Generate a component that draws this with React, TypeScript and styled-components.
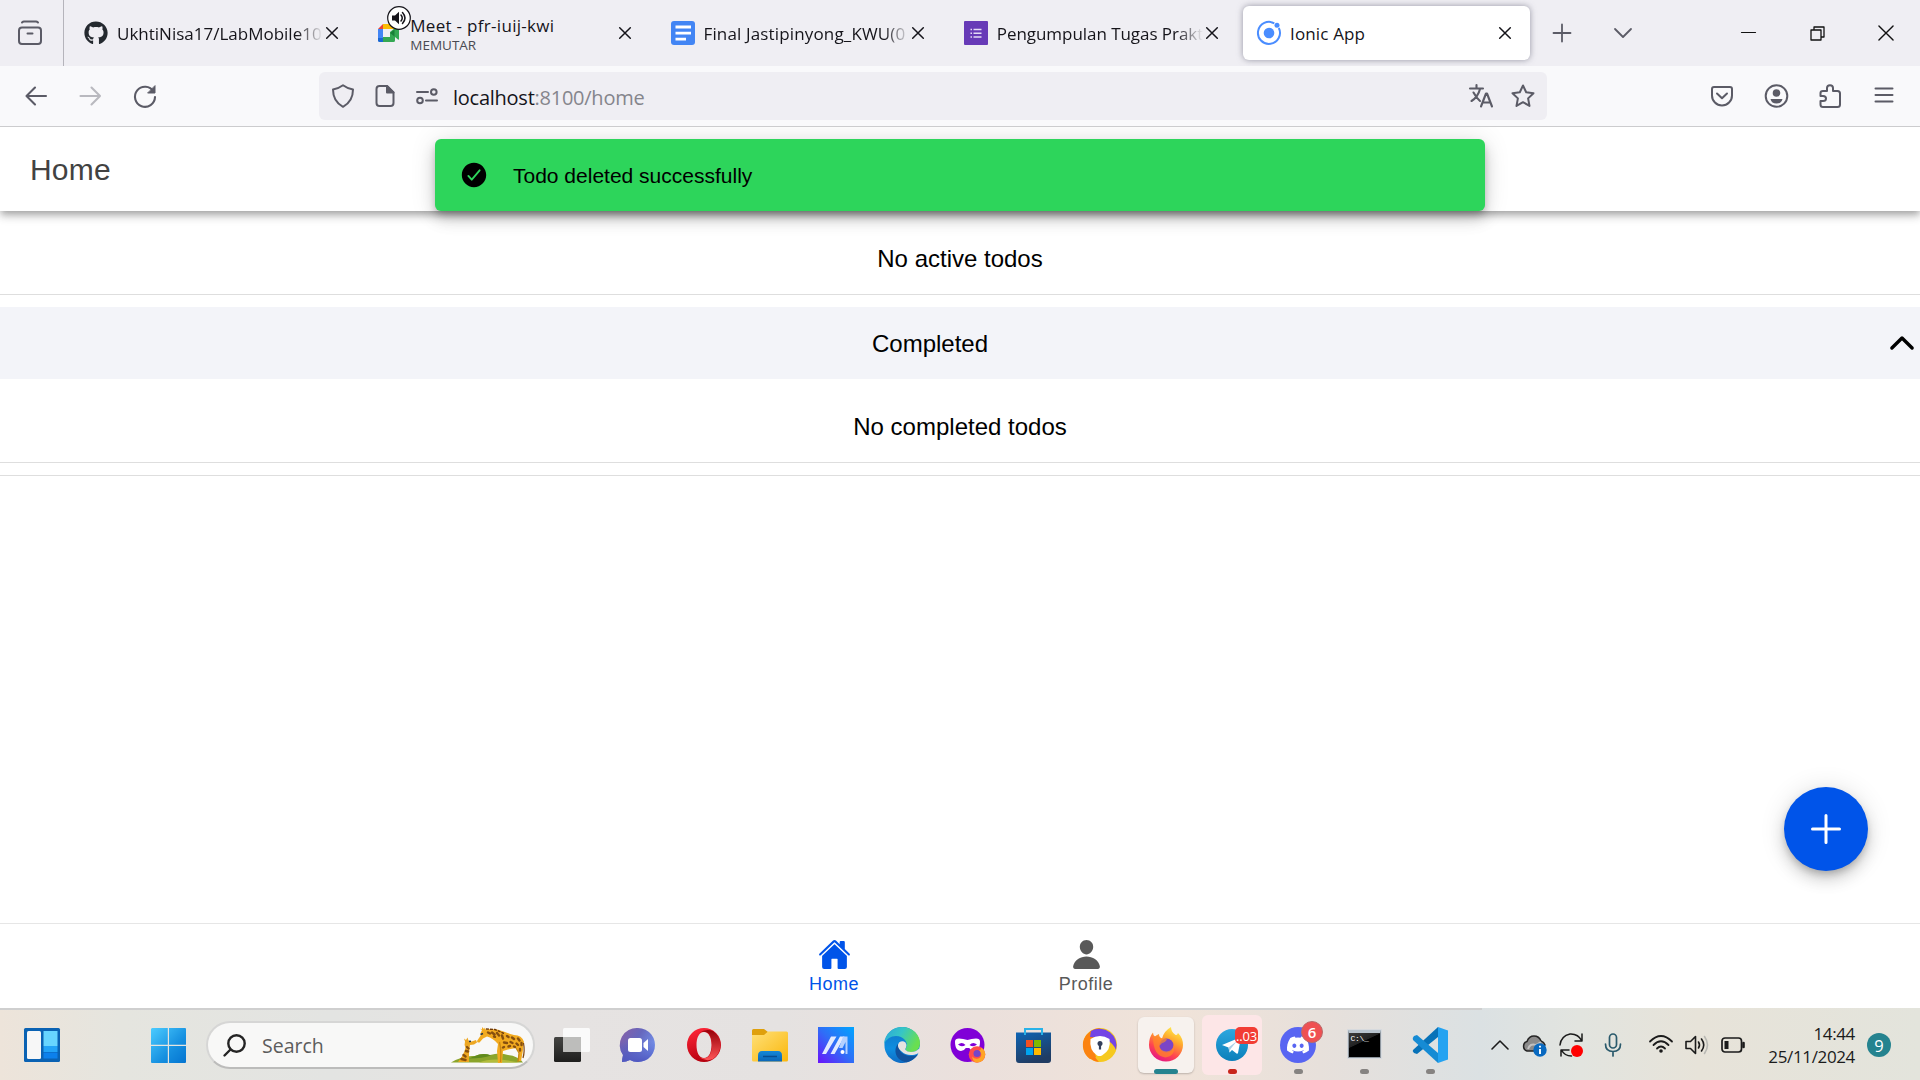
import React from 'react';
import styled, { createGlobalStyle, css } from 'styled-components';
import { IoHome, IoPerson, IoCheckmarkCircle, IoChevronUp, IoAdd } from 'react-icons/io5';
import { FaGithub, FaDiscord } from 'react-icons/fa';

const GlobalStyle = createGlobalStyle`
  * { box-sizing: border-box; }
  html, body { margin: 0; padding: 0; }
  body { width: 1920px; height: 1080px; overflow: hidden; background: #fff; }
  svg { display: block; flex: none; overflow: visible; }
`;

const uiFont = `"Open Sans", "Noto Sans", sans-serif`;
const appFont = `"Liberation Sans", Arial, sans-serif`;

const Screen = styled.div`
  width: 1920px;
  height: 1080px;
  display: flex;
  flex-direction: column;
  overflow: hidden;
  font-family: ${uiFont};
`;

/* ---------- tab strip ---------- */
const TabStrip = styled.div`
  height: 66px;
  flex: none;
  display: flex;
  align-items: stretch;
  background: #efeef3;
`;
const SidebarSlot = styled.div`
  width: 64px;
  padding-left: 18px;
  border-right: 1px solid #b5b4bb;
  display: flex;
  align-items: center;
  margin-right: 3px;
`;
const Tab = styled.div<{ $active?: boolean }>`
  width: 287.25px;
  height: 54px;
  margin: 6px 3px;
  padding: 0 17.5px 0 14px;
  display: flex;
  align-items: center;
  gap: 9px;
  border-radius: 6px;
  ${p => p.$active && css`
    background: #fff;
    box-shadow: 0 0 6px rgba(90, 90, 110, 0.6);
  `}
`;
const Favicon = styled.div`
  position: relative;
  width: 24px;
  height: 24px;
  display: flex;
  align-items: center;
  justify-content: center;
`;
const SoundBadge = styled.div`
  position: absolute;
  left: 10px;
  top: -15px;
`;
const TabText = styled.div<{ $fade?: boolean }>`
  flex: 1;
  min-width: 0;
  overflow: hidden;
  color: #15141a;
  padding-top: 1px;
  ${p => p.$fade && css`
    mask-image: linear-gradient(to right, #000 180px, transparent 206px);
  `}
`;
const TabTitle = styled.div<{ $spacing?: number }>`
  font-size: 17px;
  line-height: 24px;
  white-space: nowrap;
  letter-spacing: ${p => p.$spacing ?? 0}px;
`;
const TabState = styled.div`
  font-size: 13.5px;
  line-height: 15px;
  color: #4a4a52;
`;
const CloseSlot = styled.div`
  width: 16px;
  margin-left: -9px;
  display: flex;
  justify-content: center;
`;
const StripButtons = styled.div`
  display: flex;
  align-items: center;
  gap: 43px;
  padding-left: 20px;
`;
const WindowButtons = styled.div`
  margin-left: auto;
  display: flex;
  align-items: center;
  gap: 53px;
  padding-right: 26px;
`;

/* ---------- navigation bar ---------- */
const NavBar = styled.div`
  height: 61px;
  flex: none;
  display: flex;
  align-items: center;
  background: #f9f9fb;
  border-bottom: 1px solid #ccccce;
  padding: 0 24px 0 25px;
`;
const NavButtons = styled.div`
  width: 294px;
  display: flex;
  gap: 31px;
`;
const UrlBar = styled.div`
  width: 1228px;
  height: 48px;
  border-radius: 6px;
  background: #efeef3;
  display: flex;
  align-items: center;
  padding: 0 12px;
`;
const UrlIcons = styled.div`
  display: flex;
  gap: 18px;
  width: 122px;
`;
const Url = styled.div`
  flex: 1;
  font-size: 20px;
  letter-spacing: -0.25px;
  color: #85858c;
  padding-top: 2px;
`;
const UrlHost = styled.span`
  color: #15141a;
`;
const UrlActions = styled.div`
  display: flex;
  gap: 18px;
`;
const ToolButtons = styled.div`
  margin-left: auto;
  display: flex;
  align-items: center;
  gap: 30px;
`;

/* ---------- app page ---------- */
const Page = styled.main`
  position: relative;
  height: 881px;
  flex: none;
  display: flex;
  flex-direction: column;
  overflow: hidden;
  background: #fff;
  font-family: ${appFont};
`;
const Header = styled.header`
  height: 84px;
  flex: none;
  display: flex;
  align-items: center;
  padding: 2px 0 0 30px;
  font-size: 30px;
  letter-spacing: 0.2px;
  color: #424242;
  background: #fff;
  z-index: 1;
  box-shadow: 0 3px 6px -1.5px rgba(0,0,0,.2), 0 6px 7.5px rgba(0,0,0,.14), 0 1.5px 15px rgba(0,0,0,.12);
  clip-path: inset(0 0 -30px 0);
`;
const Toast = styled.div`
  position: absolute;
  z-index: 2;
  left: 435px;
  top: 12px;
  width: 1050px;
  height: 72px;
  border-radius: 6px;
  background: #2dd55b;
  box-shadow: 0 4.5px 7.5px -1.5px rgba(0,0,0,.2), 0 9px 15px rgba(0,0,0,.14), 0 1.5px 27px rgba(0,0,0,.12);
  display: flex;
  align-items: center;
  gap: 24px;
  padding-left: 24px;
  font-size: 21px;
  color: #000;
`;
const ToastText = styled.span`
  padding-top: 2px;
`;
const Content = styled.section`
  flex: 1;
`;
const EmptyRow = styled.div`
  height: 84px;
  border-bottom: 1px solid #dedede;
  display: flex;
  align-items: center;
  justify-content: center;
  padding-top: 13px;
  font-size: 24px;
`;
const SectionRow = styled.div`
  height: 72px;
  margin-top: 12px;
  background: #f3f4f9;
  display: flex;
  align-items: center;
  font-size: 24px;
`;
const SectionLabel = styled.div`
  flex: 1;
  text-align: center;
  padding: 2px 24px 0 0;
`;
const ListEnd = styled.div`
  height: 13px;
  border-bottom: 1px solid #dedede;
`;
const Fab = styled.button`
  position: absolute;
  right: 52px;
  bottom: 137px;
  width: 84px;
  height: 84px;
  border: 0;
  padding: 0;
  border-radius: 50%;
  display: flex;
  align-items: center;
  justify-content: center;
  color: #fff;
  background: #0054e9;
  box-shadow: 0 4.5px 7.5px -1.5px rgba(0,0,0,.2), 0 9px 15px rgba(0,0,0,.14), 0 1.5px 27px rgba(0,0,0,.12);
`;
const TabBar = styled.nav`
  height: 85px;
  flex: none;
  border-top: 1px solid #e6e6e6;
  display: flex;
  justify-content: center;
`;
const TabButton = styled.div<{ $selected?: boolean }>`
  width: 252px;
  display: flex;
  flex-direction: column;
  align-items: center;
  padding-top: 14px;
  gap: 3px;
  font-size: 18px;
  line-height: 21px;
  letter-spacing: 0.5px;
  color: ${p => (p.$selected ? '#0054e9' : '#595959')};
`;

/* ---------- taskbar ---------- */
const TaskBar = styled.footer`
  height: 72px;
  flex: none;
  display: flex;
  align-items: center;
  padding-top: 2px;
  background:
    linear-gradient(#cfcfcf, #cfcfcf) 0 0 / 1482px 2px no-repeat,
    linear-gradient(90deg, #ede4da 0, #e5e5df 120px, #e3e4e2 330px, #e6e3e2 560px, #e5e2e1 780px, #ebe0dc 980px, #f0e3d9 1180px, #e7e0db 1320px, #dbe1e3 1480px, #e2e4df 1580px, #e7e3d9 1700px, #e3e4dc 1920px);
`;
const StartArea = styled.div`
  width: 539px;
  display: flex;
  align-items: center;
  padding-left: 24px;
`;
const StartLogo = styled.div`
  margin: 1px 20px 0 91px;
`;
const SearchBox = styled.div`
  width: 329px;
  height: 48px;
  border-radius: 24px;
  border: 2px solid #d6d6d5;
  border-bottom-color: #bcbcbb;
  background: #f8f8f7;
  display: flex;
  align-items: center;
  padding: 0 6px 0 15px;
  font-size: 19.5px;
  color: #5c5c5c;
`;
const SearchText = styled.div`
  flex: 1;
  padding-left: 16px;
`;
const Apps = styled.div`
  display: flex;
`;
const AppCell = styled.div<{ $tone?: 'active' | 'alert' }>`
  position: relative;
  width: ${p => (p.$tone === 'alert' ? 60 : 56)}px;
  height: ${p => (p.$tone === 'alert' ? 60 : 56)}px;
  margin: 0 ${p => (p.$tone === 'alert' ? 3 : 5)}px;
  align-self: center;
  border-radius: 6px;
  display: flex;
  align-items: center;
  justify-content: center;
  ${p => p.$tone === 'active' && css`background: #f7f2ee; box-shadow: 0 1px 2px rgba(0,0,0,.22);`}
  ${p => p.$tone === 'alert' && css`background: #fde6e7;`}
`;
const Indicator = styled.span<{ $w: number; $color: string; $b?: number }>`
  position: absolute;
  bottom: ${p => p.$b ?? -1}px;
  width: ${p => p.$w}px;
  height: 5px;
  border-radius: 3px;
  background: ${p => p.$color};
`;
const CountBadge = styled.span<{ $round?: boolean }>`
  position: absolute;
  display: flex;
  align-items: center;
  justify-content: center;
  color: #fff;
  ${p => p.$round
    ? css`left: 31px; top: 4px; width: 22px; height: 22px; border-radius: 50%; background: #ef5052; border: 1px solid #b96a6a; font-size: 15px; font-weight: 600;`
    : css`left: 33px; top: 12px; width: 23px; height: 17px; border-radius: 5px; background: #f23c34; font-size: 13px; letter-spacing: -0.2px;`}
`;
const Tray = styled.div`
  margin-left: auto;
  padding-right: 29px;
  display: flex;
  align-items: center;
`;
const TrayItem = styled.div<{ $gap?: number }>`
  margin-right: ${p => p.$gap ?? 12}px;
`;
const Clock = styled.div`
  width: 98px;
  text-align: right;
  font-size: 17px;
  line-height: 23px;
  letter-spacing: -0.35px;
  color: #1b1b1b;
  margin-right: 12px;
  padding-bottom: 1px;
`;
const Notify = styled.div`
  width: 24px;
  height: 24px;
  border-radius: 50%;
  background: #25838f;
  color: #fff;
  font-size: 16.5px;
  display: flex;
  align-items: center;
  justify-content: center;
`;

type LineProps = { w?: number; h?: number; box?: string; color?: string; sw?: number; children: React.ReactNode };
const Line = ({ w = 24, h = 24, box, color = '#5b5b66', sw = 2, children }: LineProps) => (
  <svg width={w} height={h} viewBox={box ?? `0 0 ${w} ${h}`} fill="none" stroke={color} strokeWidth={sw} strokeLinecap="round" strokeLinejoin="round">
    {children}
  </svg>
);

const Cross = ({ size = 12, color = '#15141a', sw = 1.5 }) => (
  <Line w={size} h={size} box="0 0 12 12" color={color} sw={sw * 12 / size}><path d="M.7.7l10.6 10.6M11.3.7L.7 11.3" /></Line>
);

const MeetIcon = () => (
  <svg width="24" height="20" viewBox="0 0 24 20">
    <path d="M1 6L6 1v5z" fill="#ea4335" />
    <path d="M6 1h10.5q1.5 0 1.5 1.5V6H6z" fill="#fbbc04" />
    <path d="M1 6h5v9H1z" fill="#4285f4" />
    <path d="M1 15h5v4H2.500Q1 19 1 17.500z" fill="#1967d2" />
    <path d="M6 14h7V9l5-4v12.500q0 1.500-1.500 1.500H6z" fill="#34a853" />
    <path d="M13 10l4.500-3.500v7z" fill="#188038" />
    <path d="M18 6l3-2.500q1-.5 1 .5v12q0 1-1 .5L18 14z" fill="#34a853" />
  </svg>
);
const SoundIcon = () => (
  <svg width="24" height="24" viewBox="0 0 24 24">
    <circle cx="12" cy="12" r="11.300" fill="#fff" stroke="#15141a" strokeWidth="1.200" />
    <path d="M5 9.500h3l4-3.700v12.400l-4-3.700H5z" fill="#15141a" />
    <path d="M14 9q2.500 3 0 6M15.500 6.500q5 5.500 0 11" fill="none" stroke="#15141a" strokeWidth="1.500" strokeLinecap="round" />
  </svg>
);
const DocsIcon = () => (
  <svg width="24" height="24" viewBox="0 0 24 24">
    <rect width="24" height="24" rx="3" fill="#4285f4" />
    <path d="M4.500 6h15.500M4.500 12.200h15.500M4.500 18.200h10.500" stroke="#fff" strokeWidth="2.800" />
  </svg>
);
const FormsIcon = () => (
  <svg width="24" height="24" viewBox="0 0 24 24">
    <rect width="24" height="24" rx="1" fill="#673ab7" />
    <path d="M9.500 8.500h8M9.500 12.200h8M9.500 16h8M6.500 8.500H8M6.500 12.200H8M6.500 16H8" stroke="#e5dcf5" strokeWidth="1.400" />
  </svg>
);
const IonicIcon = () => (
  <svg width="24" height="24" viewBox="0 0 24 24">
    <path d="M17.300 2.300A11 11 0 1 0 21.800 7" fill="none" stroke="#4a8dff" strokeWidth="2" />
    <circle cx="12" cy="12" r="5.300" fill="#4a8dff" />
    <circle cx="20" cy="4.300" r="2.500" fill="#4a8dff" />
  </svg>
);

const GiraffeArt = () => (
  <svg width="76" height="36" viewBox="0 0 76 36">
    <path d="M0 35.500Q12 28 24 29q7-3.500 15-1 10-3 18 0 10 1 15 7.500z" fill="#8ba52c" />
    <path d="M24 29q8-3.500 16-.5-8 3-22 3z" fill="#5f8a1d" />
    <path d="M28 35.500q14-6 40 0z" fill="#b3bd3c" />
    <path d="M7 35q6-7 7.500-14.500-1.500-3-.5-6l-1-3 2 1.500 1.500-2.500 1 3 3 1 4.500-1.500 1 2.500-3 2-4 .5q-1.500 8-1 17z" fill="#eda722" />
    <path d="M26 14l4-6q-1-2 1-4.500L29 1.500l2 1L31 0l2 2 1-1.500.5 2Q45 1 54 5q5 2 9 3 8 0 10 7-1 3-1 8l-2 11h-2.500l.5-9-3-4-8 1.500-5 1.500-1 12h-4l-1-12 1-7Q42 11 36 9.500l-4 2-3.500 4Q26 16 26 14z" fill="#f2ab20" />
    <path d="M48.500 15q2 8 1 20M65 21l3 5-1 9" stroke="#c98712" strokeWidth="1.300" fill="none" />
    <path d="M35 2l9 .5 9 4" stroke="#6e3808" strokeWidth="1.400" fill="none" strokeDasharray="3 1" />
    <path d="M37 5.500l2 1M41 5.500l2.500 2M46 6l2 2.500M43 9.500l1 .3M51 8.500l1 3M56 9l1.500 1M61 10.500l2 1.500M67 11.500l1.500 2M53 15.500l3 .5M59.500 15l2 1M65.500 16.500l1.500 1.500M52 20.500l1-.5M57.500 19.500l1.500-.5M70.500 16v2M69 22v1.500M63 19.500l1 .5M16 20l1.500 1.500M15 24l2 .5M12.500 28l2 1.500M10.500 32l4 1" stroke="#87500f" strokeWidth="2.400" strokeLinecap="round" />
    <path d="M72.500 16q1.500 8-.5 15" stroke="#81460c" strokeWidth="1.200" fill="none" />
    <path d="M29.500 7.500l2.500-1M18 14.500l2-.3" stroke="#26384a" strokeWidth="1.600" />
  </svg>
);

const TaskViewIcon = () => (
  <svg width="36" height="36" viewBox="0 0 36 36">
    <defs><linearGradient id="tv" x2="0" y2="1"><stop stopColor="#454543" /><stop offset="1" stopColor="#1e1e1d" /></linearGradient></defs>
    <rect x="0" y="10" width="27" height="25" rx="1.500" fill="url(#tv)" />
    <rect x="9" y="1" width="27" height="24" rx="1.500" fill="#fafafa" />
    <path d="M9 10h18v15H10.500Q9 25 9 23.500z" fill="#bdbdbb" />
  </svg>
);
const ChatIcon = () => (
  <svg width="36" height="36" viewBox="0 0 36 36">
    <defs><linearGradient id="ch" x1="0" x2="1" y2=".6"><stop stopColor="#8a5fa5" /><stop offset=".5" stopColor="#6667bd" /><stop offset="1" stopColor="#7595ef" /></linearGradient>
    <linearGradient id="ch2" x2="0" y2="1"><stop offset=".4" stopColor="#5058c0" stopOpacity="0" /><stop offset="1" stopColor="#5058c0" /></linearGradient></defs>
    {['url(#ch)', 'url(#ch2)'].map(f => <path key={f} d="M18 1a17 17 0 1 1-8 32q-4 2-8 2 0-3 1-7A17 17 0 0 1 18 1z" fill={f} />)}
    <rect x="8" y="11" width="14" height="14" rx="2.500" fill="#fff" />
    <path d="M23.500 16l4.500-4v12l-4.500-4z" fill="#fff" />
  </svg>
);
const OperaIcon = () => (
  <svg width="36" height="36" viewBox="0 0 36 36">
    <defs><linearGradient id="op" x1=".2" x2=".5" y2="1"><stop stopColor="#ff2638" /><stop offset="1" stopColor="#b4000e" /></linearGradient>
    <linearGradient id="op2" x2="0" y2="1"><stop stopColor="#960008" /><stop offset="1" stopColor="#ff5558" /></linearGradient></defs>
    <path fillRule="evenodd" d="M18 1a17 17 0 0 1 0 34a17 17 0 0 1 0-34zM18 5c-5 0-7.500 6-7.500 13s2.500 13 7.500 13 7.500-6 7.500-13S23 5 18 5z" fill="url(#op)" />
    <path d="M13 6Q20 1 27 4a17 17 0 0 1 0 28q-7 3-14-2 6 3 10-1c4-6 4-16 0-22q-4-4-10-1z" fill="url(#op2)" />
  </svg>
);
const FolderIcon = () => (
  <svg width="36" height="36" viewBox="0 0 36 36">
    <defs><linearGradient id="fo" x2="1" y2="1"><stop stopColor="#ffe078" /><stop offset="1" stopColor="#fab70c" /></linearGradient>
    <linearGradient id="fo2" x2="0" y2="1"><stop stopColor="#1488d8" /><stop offset="1" stopColor="#0b66b7" /></linearGradient></defs>
    <path d="M0 3.500Q0 2 1.500 2H12l4 3h18v6H0z" fill="#dfa00c" />
    <path d="M0 8h12l4-3.500h18.500Q36 4.500 36 6v27q0 1.500-1.500 1.500h-33Q0 34.500 0 33z" fill="url(#fo)" />
    <path d="M6 34.500v-6Q6 24 10 24h16q4 0 4 4.500v6z" fill="url(#fo2)" />
    <path d="M11 29.500h14" stroke="#074d91" strokeWidth="1.500" />
  </svg>
);
const AsusIcon = () => (
  <svg width="36" height="36" viewBox="0 0 36 36">
    <defs><linearGradient id="as" x1="1" y1="0" x2="0" y2="1"><stop stopColor="#00a5ff" /><stop offset=".5" stopColor="#2f6ef7" /><stop offset="1" stopColor="#6a12fb" /></linearGradient></defs>
    <path d="M0 0h36v36H0z" fill="url(#as)" />
    <path d="M4 27L13 9.500h5.500L8 27zM12.500 27L22 9.500h4.500L16.500 27z" fill="#e2eaff" />
    <path d="M25 9.500h4.500V27h-2V15l-3 6h-3.500z" fill="#b4d0ff" />
    <circle cx="24.500" cy="25" r="2" fill="#fff" />
  </svg>
);
const EdgeIcon = () => (
  <svg width="36" height="36" viewBox="0 0 36 36">
    <defs>
      <linearGradient id="e1" x2="1" y2=".4"><stop stopColor="#2aa5dc" /><stop offset=".5" stopColor="#36c6c6" /><stop offset="1" stopColor="#69df50" /></linearGradient>
      <linearGradient id="e2" x2="0" y2="1"><stop stopColor="#1174c5" /><stop offset=".6" stopColor="#0e8ee0" /><stop offset="1" stopColor="#0f6cc4" /></linearGradient>
    </defs>
    <path d="M18 0a18 18 0 1 0 16 27L36 18A18 18 0 0 0 18 0z" fill="url(#e2)" />
    <path d="M0 17C1 6 9 0 18 0c11 0 18 8 18 16 0 6-4 9-8.500 9-5 0-7-1.500-5.500-4 3-6-3-12-10-12Q4 9 0 17z" fill="url(#e1)" />
    <path d="M14 17c-5 5-3 17 9 18.300Q30 33 34 27.500q-5 2.500-11 1-8-2-9-11.500z" fill="#10529e" />
    <path d="M21.500 23q-.8-1 .5-2.500 1-3-.5-5-3-2.500-6.500 0-2.500 4 1.500 8 6 6 14 4.200Q33 27 34.500 26l2-3-2-1q-2.500 3-7.500 3-4 0-5.500-2z" fill="#e7e3e1" />
  </svg>
);
const PrivateIcon = () => (
  <svg width="36" height="36" viewBox="0 0 36 36">
    <circle cx="17.500" cy="18" r="17" fill="#8000d7" />
    <path fillRule="evenodd" d="M5 14.500q0-3 4-3 4 0 8.500 1.500 4-1.500 8.500-1.500 4 0 4 3c0 6-2 9.500-6 9.500q-3 0-4.800-3h-3.400Q14 24 11 24c-4 0-6-3.500-6-9.500zm3 3q3.500 3.200 7.500.500-3.500-3.800-7.500-.500zm11.500.500q4 2.700 7.500-.500-4-3.300-7.500.500z" fill="#fff" />
    <circle cx="27" cy="27.500" r="8.300" fill="#ff4e4a" />
    <path d="M27 35.500A8 8 0 0 0 31 20.500q0 3-2 3 4 4 1 7-4 3-8-1 1 6 5 6z" fill="#ffa424" />
    <circle cx="27" cy="26.500" r="3.500" fill="#7546c8" />
  </svg>
);
const StoreIcon = () => (
  <svg width="36" height="36" viewBox="0 0 36 36">
    <defs><linearGradient id="st" x2=".4" y2="1"><stop stopColor="#0e64b4" /><stop offset="1" stopColor="#203c63" /></linearGradient></defs>
    <path d="M0 5.500h35V33q0 3-3 3H3q-3 0-3-3z" fill="url(#st)" />
    <path d="M9 8V2h17v6" fill="none" stroke="#29b2e8" strokeWidth="2" />
    <path d="M10 13h7v7h-7z" fill="#f25022" /><path d="M18 13h7v7h-7z" fill="#7fba00" />
    <path d="M10 21h7v7h-7z" fill="#00a4ef" /><path d="M18 21h7v7h-7z" fill="#ffb900" />
  </svg>
);
const SecureIcon = () => (
  <svg width="36" height="36" viewBox="0 0 36 36">
    <circle cx="18" cy="18" r="17" fill="#f6c91f" />
    <path d="M9 4a17 17 0 0 0 8 31Q6 24 9 4z" fill="#ff7a12" />
    <path d="M18 1Q7 2 2 12a17 17 0 0 0 6 20l6-2-5-16z" fill="#fb8311" />
    <path d="M9 4a17 17 0 0 1 25 19Q29 10 8 10z" fill="#7344e5" />
    <path d="M8.500 12q9.500-6 19 0 2 11-7.500 16.500-2.500 1-5 0Q7 23 8.500 12z" fill="#fff" />
    <circle cx="18" cy="16.500" r="2.500" fill="#34405b" /><path d="M16.900 17h2.200v5.500h-2.200z" fill="#34405b" />
  </svg>
);
const FirefoxIcon = () => (
  <svg width="36" height="36" viewBox="0 0 36 36">
    <defs><linearGradient id="ff" x1=".8" y1="0" x2=".3" y2="1"><stop stopColor="#fff44f" /><stop offset=".35" stopColor="#ffa92c" /><stop offset=".7" stopColor="#ff4550" /><stop offset="1" stopColor="#e31587" /></linearGradient></defs>
    <path d="M23 0q0 4.500 4 7.500 2 1.500 3-1.500 5 5 5 12a17 16.500 0 0 1-34 0Q1 10 5 5.500q0 3 2 4 1-1.500 4-2.500 0 3 3 4.500Q16 4 23 0z" fill="url(#ff)" />
    <circle cx="18.500" cy="18.500" r="7" fill="#7b45c7" />
    <path d="M5 10q4-2 7 1l7 1q-1 3-5 4-1.500 2-3 3 1.500 5 7.500 5.500 7-.5 7-7.500 3 11.500-8 13.500Q5 29 5 10z" fill="#ff8a26" opacity=".7" />
  </svg>
);
const TelegramIcon = () => (
  <svg width="32" height="32" viewBox="0 0 32 32">
    <defs><linearGradient id="tg" x2="0" y2="1"><stop stopColor="#2da7df" /><stop offset="1" stopColor="#0a7fba" /></linearGradient></defs>
    <circle cx="16" cy="16" r="16" fill="url(#tg)" />
    <path d="M6 16L24 8.500q1 0 .8 1L22 24q-.5 1-1.500.5L16 21l-2.500 2.500-1-5z" fill="#fff" />
    <path d="M12.500 18.500L21 12l-6.500 8-1 3.500z" fill="#a9cfe6" />
  </svg>
);
const DiscordIcon = styled.div`
  width: 36px;
  height: 36px;
  border-radius: 50%;
  background: #5865f2;
  color: #fff;
  display: flex;
  align-items: center;
  justify-content: center;
`;
const Terminal = styled.div`
  width: 33px;
  height: 28px;
  margin-bottom: 2px;
  background: linear-gradient(155deg, #3c3c3c 0, #222 38%, #000 40%);
  border: 1px solid #8e969e;
  border-top: 3px solid #b9c4ce;
  outline: 1px solid #d7dade;
  color: #fff;
  font: 8px/11px "Liberation Mono", monospace;
  letter-spacing: -0.3px;
  padding-left: 2px;
  white-space: nowrap;
  overflow: hidden;
`;
const CodeIcon = () => (
  <svg width="36" height="36" viewBox="0 0 36 36">
    <path d="M26 0v10L5 27 2 26Q0 24 1 23z" fill="#0872b8" />
    <path d="M1 13q-1-2 1-4l3-1 21 18v10z" fill="#168bd4" />
    <path d="M26 0l10 3.500v29L26 36z" fill="#25a3f1" />
  </svg>
);

export default function App() {
  return (
    <Screen>
      <GlobalStyle />
      <TabStrip>
        <SidebarSlot>
          <Line><rect x="1" y="6.500" width="22" height="16.500" rx="3" /><path d="M4 1.500q1-1 2-1h12q1 0 2 1M9.500 12.500h5" /></Line>
        </SidebarSlot>
        <Tab>
          <Favicon><FaGithub size={24} color="#24292f" /></Favicon>
          <TabText $fade><TabTitle>UkhtiNisa17/LabMobile10</TabTitle></TabText>
          <CloseSlot><Cross /></CloseSlot>
        </Tab>
        <Tab>
          <Favicon><MeetIcon /><SoundBadge><SoundIcon /></SoundBadge></Favicon>
          <TabText><TabTitle $spacing={0.3}>Meet - pfr-iuij-kwi</TabTitle><TabState>MEMUTAR</TabState></TabText>
          <CloseSlot><Cross /></CloseSlot>
        </Tab>
        <Tab>
          <Favicon><DocsIcon /></Favicon>
          <TabText $fade><TabTitle $spacing={0.15}>Final Jastipinyong_KWU(0</TabTitle></TabText>
          <CloseSlot><Cross /></CloseSlot>
        </Tab>
        <Tab>
          <Favicon><FormsIcon /></Favicon>
          <TabText $fade><TabTitle $spacing={-0.05}>Pengumpulan Tugas Prakt</TabTitle></TabText>
          <CloseSlot><Cross /></CloseSlot>
        </Tab>
        <Tab $active>
          <Favicon><IonicIcon /></Favicon>
          <TabText><TabTitle $spacing={0.15}>Ionic App</TabTitle></TabText>
          <CloseSlot><Cross /></CloseSlot>
        </Tab>
        <StripButtons>
          <Line w={18} h={18} sw={1.8}><path d="M9 .5v17M.5 9h17" /></Line>
          <Line w={18} h={10} sw={1.8}><path d="M1 1l8 8 8-8" /></Line>
        </StripButtons>
        <WindowButtons>
          <Line w={16} h={16} color="#111" sw={1.2}><path d="M.5 7.500h14" /></Line>
          <Line w={15} h={15} color="#111" sw={1.3}><path d="M1 4h10v10H1zM4 4V1h10v10h-3" /></Line>
          <Cross size={16} color="#111" sw={1.4} />
        </WindowButtons>
      </TabStrip>

      <NavBar>
        <NavButtons>
          <Line w={23} sw={2.100}><path d="M21 12H1.500M10 3.500L1.500 12l8.500 8.500" /></Line>
          <Line w={23} color="#b9b9bf" sw={2.100}><path d="M1.500 12H21M12.500 3.500L21 12l-8.500 8.500" /></Line>
          <Line w={24} sw={2.100}><path d="M20.500 7.500A10 10 0 1 0 22 13" /><path d="M22 2v7h-7z" fill="#5b5b66" strokeWidth="1" /></Line>
        </NavButtons>
        <UrlBar>
          <UrlIcons>
            <Line><path d="M12 1.200q5 3.600 10 4.300 0 12-10 17.300Q2 17.500 2 5.500 7 4.800 12 1.200z" /></Line>
            <Line><path d="M6 2h8l6.500 6.500V19q0 3-3 3H6.500q-3 0-3-3V5Q3.500 2 6.500 2z" /><path d="M14 2v6.500h6.500z" fill="#5b5b66" /></Line>
            <Line><path d="M2 8h11M11 16.500h11" /><circle cx="18.800" cy="8" r="2.800" /><circle cx="5" cy="16.500" r="2.800" /></Line>
          </UrlIcons>
          <Url><UrlHost>localhost</UrlHost>:8100/home</Url>
          <UrlActions>
            <Line sw={2.100}><path d="M1 4.500h13M7.500 1v3.500M11 5Q9 13 2.500 17M4.500 8.500q3 5.500 6.500 8.500M12 22.500l5-13h1l5 13M14 18.500h7" /></Line>
            <Line><path d="M12 1.500l3.200 6.800 7.300.9-5.400 5.200 1.400 7.500-6.500-3.700-6.500 3.700 1.400-7.500L1.500 9.200l7.300-.9z" /></Line>
          </UrlActions>
        </UrlBar>
        <ToolButtons>
          <Line><path d="M4 3h16q2 0 2 2v6.500a10 10 0 0 1-20 0V5q0-2 2-2z" /><path d="M7 9.500l5 4.800 5-4.800" /></Line>
          <Line><circle cx="12.500" cy="12" r="10.800" /><circle cx="12.500" cy="9" r="3.800" fill="#5b5b66" stroke="none" /><path d="M6.500 15h12q-1 4.500-6 4.500t-6-4.500z" fill="#5b5b66" stroke="none" /></Line>
          <Line><path d="M9 7V4q0-2.800 3-2.800T15 4v3h4.500Q22 7 22 9.500v11q0 2.500-2.500 2.500H5q-2.500 0-2.500-2.500V17H5q3 0 3-2.500T5 12H2.500V9Q2.500 7 5 7z" /></Line>
          <Line><path d="M3.500 4.500h17M3.500 11h17M3.500 17.500h17" /></Line>
        </ToolButtons>
      </NavBar>

      <Page>
        <Header>Home</Header>
        <Toast><IoCheckmarkCircle size={30} /><ToastText>Todo deleted successfully</ToastText></Toast>
        <Content>
          <EmptyRow>No active todos</EmptyRow>
          <SectionRow><SectionLabel>Completed</SectionLabel><IoChevronUp size={36} /></SectionRow>
          <EmptyRow>No completed todos</EmptyRow>
          <ListEnd />
        </Content>
        <Fab><IoAdd size={48} /></Fab>
        <TabBar>
          <TabButton $selected><IoHome size={33} />Home</TabButton>
          <TabButton><IoPerson size={33} />Profile</TabButton>
        </TabBar>
      </Page>

      <TaskBar>
        <StartArea>
          <svg width="36" height="34" viewBox="0 0 36 34">
            <rect width="36" height="34" rx="1.500" fill="#0a62b3" />
            <rect x="3" y="3" width="14" height="28" rx="1.500" fill="#f7f7f7" />
            <path d="M19.500 3h14v15h-14z" fill="#67d5ff" /><path d="M19.500 18h14v6h-14z" fill="#22a3f7" /><path d="M19.500 24.500h14v6h-14z" fill="#0c80ec" />
          </svg>
          <StartLogo>
            <svg width="35" height="35" viewBox="0 0 35 35">
              <defs><linearGradient id="wn" x2="1" y2="1" gradientUnits="userSpaceOnUse" x1="0" y1="0" gradientTransform="scale(35)"><stop stopColor="#4cccff" /><stop offset=".6" stopColor="#1690e0" /><stop offset="1" stopColor="#0474d0" /></linearGradient></defs>
              <path d="M1 0h15.800v16.800H0V1zM18 0h16q1 0 1 1v15.800H18zM0 18h16.800v17H1q-1 0-1-1zM18 18h17v16q0 1-1 1H18z" fill="url(#wn)" />
            </svg>
          </StartLogo>
          <SearchBox>
            <Line w={23} h={23} color="#242424" sw={2.400}><circle cx="13.500" cy="9.500" r="8.200" /><path d="M7.500 15.500L1.500 21.500" /></Line>
            <SearchText>Search</SearchText>
            <GiraffeArt />
          </SearchBox>
        </StartArea>
        <Apps>
          <AppCell><TaskViewIcon /></AppCell>
          <AppCell><ChatIcon /></AppCell>
          <AppCell><OperaIcon /></AppCell>
          <AppCell><FolderIcon /></AppCell>
          <AppCell><AsusIcon /></AppCell>
          <AppCell><EdgeIcon /></AppCell>
          <AppCell><PrivateIcon /></AppCell>
          <AppCell><StoreIcon /></AppCell>
          <AppCell><SecureIcon /></AppCell>
          <AppCell $tone="active"><FirefoxIcon /><Indicator $w={24} $color="#25838f" /></AppCell>
          <AppCell $tone="alert"><TelegramIcon /><CountBadge>..03</CountBadge><Indicator $w={9} $color="#c8261c" $b={1} /></AppCell>
          <AppCell><DiscordIcon><FaDiscord size={24} /></DiscordIcon><CountBadge $round>6</CountBadge><Indicator $w={9} $color="#868381" /></AppCell>
          <AppCell><Terminal>C:\_</Terminal><Indicator $w={9} $color="#868381" /></AppCell>
          <AppCell><CodeIcon /><Indicator $w={9} $color="#868381" /></AppCell>
        </Apps>
        <Tray>
          <TrayItem $gap={13}><Line w={18} h={10} color="#1b1b1b" sw={1.600}><path d="M1 9l8-8 8 8" /></Line></TrayItem>
          <TrayItem>
            <svg width="25" height="24" viewBox="0 0 25 24">
              <path d="M5 18a5 5 0 0 1 0-9.500Q7 3 12 3t7 5q3 1 4 4l-9 6z" fill="#8b8b8b" stroke="#242424" strokeWidth="1.500" />
              <path d="M6 16q2-6 8-4l5-3" stroke="#c2c2c2" strokeWidth="2" fill="none" />
              <circle cx="18" cy="17" r="6.700" fill="#0869c0" />
              <path d="M18 16v5M18 12.700v1.800" stroke="#fff" strokeWidth="1.900" />
            </svg>
          </TrayItem>
          <TrayItem $gap={21}>
            <Line color="#1b1b1b" sw={1.500}><path d="M1 12Q2 3 11 1q8-.5 12 7M23 1v7h-7M2 23v-6h8M2.500 17q3 6 10 6" /><circle cx="18" cy="18" r="6" fill="#f00" stroke="none" /></Line>
          </TrayItem>
          <TrayItem $gap={27}>
            <Line w={18} color="#2a5a6c" sw={1.700}><rect x="5.500" y="1" width="7" height="14" rx="3.500" /><path d="M1.500 11q0 7.500 7.500 7.500t7.500-7.500M9 19v4" /></Line>
          </TrayItem>
          <TrayItem>
            <Line color="#1b1b1b" sw={1.800}><path d="M1 8.500q11-11 22 0M4.500 12q7.500-7.500 15 0M8 15.500q4-4 8 0" /><circle cx="12" cy="18" r="1.800" fill="#1b1b1b" stroke="none" /></Line>
          </TrayItem>
          <TrayItem>
            <Line color="#1b1b1b" sw={1.600}><path d="M1 8.500h4.500l5-5v17l-5-5H1zM13.500 9q2 3 0 6M16.500 6q4.500 6 0 12" /><path d="M19.500 3.500q6 8.500 0 17" stroke="#b9b9b4" /></Line>
          </TrayItem>
          <TrayItem>
            <Line color="#1b1b1b" sw={1.700}><rect x="1" y="5" width="19.500" height="14" rx="3" /><path d="M3.500 8h4v8h-4z" fill="#1b1b1b" stroke="none" /><path d="M22.500 10v4" strokeWidth="2.600" /></Line>
          </TrayItem>
          <Clock>14:44<br />25/11/2024</Clock>
          <Notify>9</Notify>
        </Tray>
      </TaskBar>
    </Screen>
  );
}
